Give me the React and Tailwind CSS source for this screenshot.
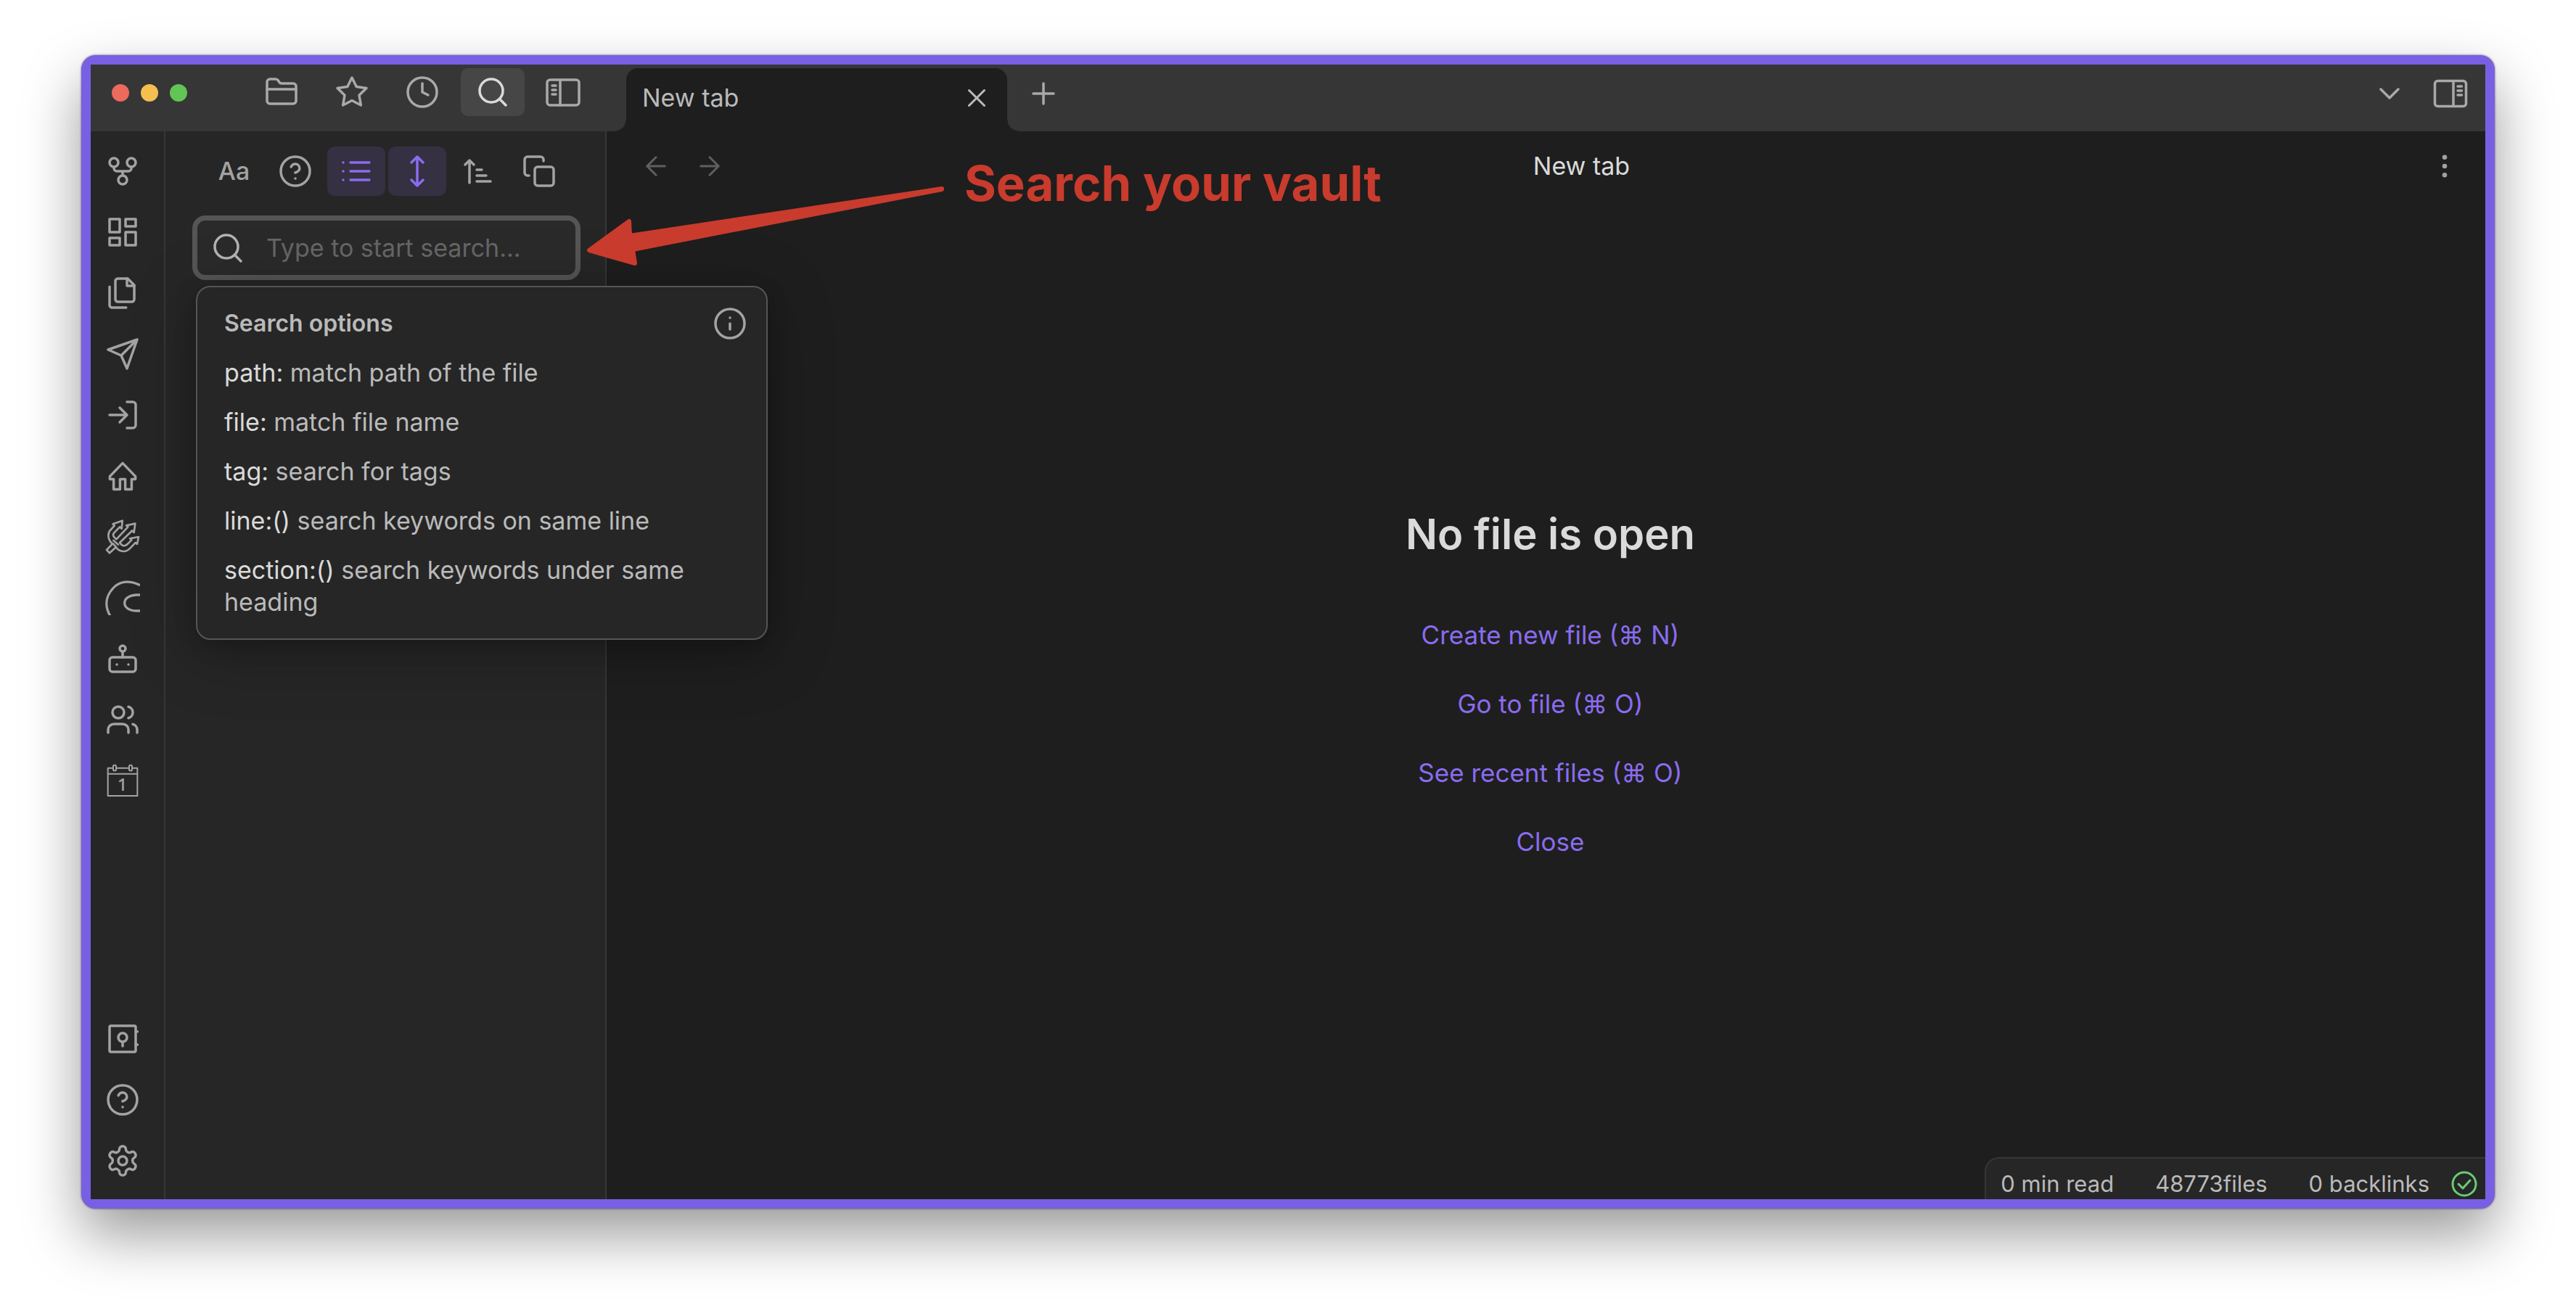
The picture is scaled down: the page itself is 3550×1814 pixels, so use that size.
import React from "react";

function Icon({ className = "size-12", children, ...rest }) {
  return (
    <svg
      viewBox="0 0 24 24"
      fill="none"
      stroke="currentColor"
      strokeWidth="1.75"
      strokeLinecap="round"
      strokeLinejoin="round"
      aria-hidden="true"
      className={`${className} shrink-0`}
      {...rest}
    >
      {children}
    </svg>
  );
}

const FolderIcon = () => (
  <Icon>
    <path d="M20 20a2 2 0 0 0 2-2V8a2 2 0 0 0-2-2h-7.9a2 2 0 0 1-1.69-.9L9.6 3.9A2 2 0 0 0 7.93 3H4a2 2 0 0 0-2 2v13a2 2 0 0 0 2 2Z" />
    <path d="M2 10h20" />
  </Icon>
);
const StarIcon = () => (
  <Icon>
    <polygon points="12 2 15.09 8.26 22 9.27 17 14.14 18.18 21.02 12 17.77 5.82 21.02 7 14.14 2 9.27 8.91 8.26 12 2" />
  </Icon>
);
const ClockIcon = () => (
  <Icon>
    <circle cx="12" cy="12" r="10" />
    <path d="M12 6v6l4 2" />
  </Icon>
);
const SearchIcon = () => (
  <Icon>
    <circle cx="11" cy="11" r="8" />
    <path d="m21 21-4.35-4.35" />
  </Icon>
);
const LeftPanelIcon = () => (
  <Icon viewBox="0 0 48 48" strokeWidth="3.5">
    <rect x="2" y="7" width="44" height="35" rx="4" />
    <path d="M20 7v35M9 15h5M9 21h5M9 27h5" />
  </Icon>
);
const RightPanelIcon = () => (
  <Icon viewBox="0 0 48 48" strokeWidth="3.5">
    <rect x="2.5" y="6.5" width="43" height="35" rx="4" />
    <path d="M28 6.5v35M34 14h5.5M34 20h5.5M34 26h5.5" />
  </Icon>
);
const CloseIcon = () => (
  <Icon className="size-[42px]">
    <path d="M18 6 6 18M6 6l12 12" />
  </Icon>
);
const PlusIcon = () => (
  <Icon>
    <path d="M5 12h14M12 5v14" />
  </Icon>
);
const ChevronIcon = () => (
  <Icon>
    <path d="m6 9 6 6 6-6" />
  </Icon>
);
const BackIcon = () => (
  <Icon className="size-[42px]">
    <path d="m12 19-7-7 7-7M19 12H5" />
  </Icon>
);
const ForwardIcon = () => (
  <Icon className="size-[42px]">
    <path d="M5 12h14M12 5l7 7-7 7" />
  </Icon>
);
const MoreIcon = () => (
  <Icon className="size-[42px]">
    <circle cx="12" cy="12" r="1" />
    <circle cx="12" cy="5" r="1" />
    <circle cx="12" cy="19" r="1" />
  </Icon>
);
const HelpIcon = () => (
  <Icon>
    <circle cx="12" cy="12" r="10" />
    <path d="M9.09 9a3 3 0 0 1 5.83 1c0 2-3 3-3 3M12 17h.01" />
  </Icon>
);
const ListIcon = () => (
  <Icon>
    <path d="M8 6h13M8 12h13M8 18h13M3 6h.01M3 12h.01M3 18h.01" />
  </Icon>
);
const MoveVerticalIcon = () => (
  <Icon>
    <path d="m8 18 4 4 4-4M8 6l4-4 4 4M12 2v20" />
  </Icon>
);
const SortIcon = () => (
  <Icon>
    <path d="m3 7.5 3-3 3 3M6 4.5V20M11 11h3.5M11 15h6.5M11 19h9.5" />
  </Icon>
);
const CopyIcon = () => (
  <Icon>
    <rect x="9" y="9" width="13" height="13" rx="2" />
    <path d="M5 15H4a2 2 0 0 1-2-2V4a2 2 0 0 1 2-2h9a2 2 0 0 1 2 2v1" />
  </Icon>
);
const InfoIcon = () => (
  <Icon>
    <circle cx="12" cy="12" r="10" />
    <path d="M12 16v-4M12 8h.01" />
  </Icon>
);

const GraphIcon = () => (
  <Icon>
    <circle cx="12" cy="18" r="3" />
    <circle cx="6" cy="6" r="3" />
    <circle cx="18" cy="6" r="3" />
    <path d="M18 9v1a2 2 0 0 1-2 2H8a2 2 0 0 1-2-2V9M12 12v3" />
  </Icon>
);
const DashboardIcon = () => (
  <Icon>
    <rect x="3" y="3" width="7" height="9" />
    <rect x="14" y="3" width="7" height="5" />
    <rect x="14" y="12" width="7" height="9" />
    <rect x="3" y="16" width="7" height="5" />
  </Icon>
);
const FilesIcon = () => (
  <Icon>
    <path d="M15.5 2H8.6c-.4 0-.8.2-1.1.5-.3.3-.5.7-.5 1.1v12.8c0 .4.2.8.5 1.1.3.3.7.5 1.1.5h9.8c.4 0 .8-.2 1.1-.5.3-.3.5-.7.5-1.1V6.5L15.5 2z" />
    <path d="M3 7.6v12.8c0 .4.2.8.5 1.1.3.3.7.5 1.1.5h9.8M15 2v5h5" />
  </Icon>
);
const SendIcon = () => (
  <Icon>
    <path d="M22 2 11 13M22 2l-7 20-4-9-9-4 20-7z" />
  </Icon>
);
const EnterIcon = () => (
  <Icon>
    <path d="M15 3h4a2 2 0 0 1 2 2v14a2 2 0 0 1-2 2h-4M10 17l5-5-5-5M15 12H3" />
  </Icon>
);
const HomeIcon = () => (
  <Icon>
    <path d="M12 3.2 20.8 12.3V14.2H18.2V21.2H13.8V14.2H10.2V21.2H5.8V14.2H3.2V12.3Z" />
  </Icon>
);
const TridentIcon = () => (
  <Icon viewBox="0 0 144 144" strokeWidth="8">
    <path d="M6 126 L30 101 C14 88 8 66 18 48 L38 26 L32 19 L71 5 L68 38 L60 31 L36 56 C31 62 33 68 37 73 L46 82 L94 31 L87 25 L124 17 L119 54 L112 46 L60 96 L68 105 C76 112 86 108 92 102 L109 85 L102 79 L138 72 L132 102 L125 96 L104 118 C86 138 62 136 44 115 L18 139 Z" />
    <path d="M32 100 L45 114 M34 87 L54 104" />
  </Icon>
);
const SwirlIcon = () => (
  <Icon viewBox="0 0 144 144" strokeWidth="10" strokeLinecap="butt">
    <path d="M144 20 C104 0 62 0 32 33 C2 66 -3 106 20 146" />
    <path d="M146 60 H128 C98 62 80 76 80 93 C80 112 98 126 132 126 H146" />
  </Icon>
);
const BotIcon = () => (
  <Icon>
    <rect x="3" y="11" width="18" height="10" rx="2" />
    <circle cx="12" cy="5" r="2" />
    <path d="M12 7v4M8 16h.01M16 16h.01" />
  </Icon>
);
const UsersIcon = () => (
  <Icon>
    <path d="M16 21v-2a4 4 0 0 0-4-4H6a4 4 0 0 0-4 4v2" />
    <circle cx="9" cy="7" r="4" />
    <path d="M22 21v-2a4 4 0 0 0-3-3.87M16 3.13a4 4 0 0 1 0 7.75" />
  </Icon>
);
const CalendarIcon = () => (
  <span className="grid size-12 place-items-center">
    <Icon className="col-start-1 row-start-1 size-12" viewBox="0 0 144 144" strokeWidth="6">
      <path d="M30 20H11V135H133V20H114M48 20H94M11 44H133" />
      <rect x="33" y="8" width="12" height="23" rx="5" />
      <rect x="99" y="8" width="12" height="23" rx="5" />
    </Icon>
    <span className="col-start-1 row-start-1 pt-2.5 font-['Noto_Sans',sans-serif] text-2xl leading-6 font-medium">1</span>
  </span>
);
const VaultIcon = () => (
  <Icon>
    <rect x="3" y="3" width="18" height="18" rx="1" />
    <circle cx="12" cy="11" r="3" />
    <path d="M12 14v3M21 7h1.2M21 16h1.2" />
  </Icon>
);
const SettingsIcon = () => (
  <Icon>
    <path d="M12.22 2h-.44a2 2 0 0 0-2 2v.18a2 2 0 0 1-1 1.73l-.43.25a2 2 0 0 1-2 0l-.15-.08a2 2 0 0 0-2.73.73l-.22.38a2 2 0 0 0 .73 2.73l.15.1a2 2 0 0 1 1 1.72v.51a2 2 0 0 1-1 1.74l-.15.09a2 2 0 0 0-.73 2.73l.22.38a2 2 0 0 0 2.73.73l.15-.08a2 2 0 0 1 2 0l.43.25a2 2 0 0 1 1 1.73V20a2 2 0 0 0 2 2h.44a2 2 0 0 0 2-2v-.18a2 2 0 0 1 1-1.73l.43-.25a2 2 0 0 1 2 0l.15.08a2 2 0 0 0 2.73-.73l.22-.39a2 2 0 0 0-.73-2.73l-.15-.08a2 2 0 0 1-1-1.74v-.5a2 2 0 0 1 1-1.74l.15-.09a2 2 0 0 0 .73-2.73l-.22-.38a2 2 0 0 0-2.73-.73l-.15.08a2 2 0 0 1-2 0l-.43-.25a2 2 0 0 1-1-1.73V4a2 2 0 0 0-2-2z" />
    <circle cx="12" cy="12" r="3" />
  </Icon>
);

const sidebarTabs = [
  ["Files", FolderIcon, false],
  ["Starred", StarIcon, false],
  ["Recent files", ClockIcon, false],
  ["Search", SearchIcon, true],
  ["Toggle left sidebar", LeftPanelIcon, false],
];

function TitleBar() {
  return (
    <header className="flex h-[92px] items-start bg-[#363636] pt-[5px] pr-6 pl-[29px] text-[#a9a9a9]">
      <div className="flex h-[68px] items-center gap-4">
        <button aria-label="Close window" className="size-6 rounded-full bg-[#ed6a5f]" />
        <button aria-label="Minimize window" className="size-6 rounded-full bg-[#f5bf4f]" />
        <button aria-label="Zoom window" className="size-6 rounded-full bg-[#62c555]" />
      </div>
      <nav className="ml-[86px] flex gap-[9px]">
        {sidebarTabs.map(([label, Glyph, active]) => (
          <button
            key={label}
            aria-label={label}
            className={`flex h-[66px] w-[88px] items-center justify-center rounded-[10px] ${
              active ? "bg-[#464646] text-[#dadada]" : ""
            }`}
          >
            <Glyph />
          </button>
        ))}
      </nav>
      <div className="relative ml-[43px] flex h-[87px] w-[525px] items-center justify-between rounded-t-2xl bg-[#1e1e1e] pr-[21px] pb-1.5 pl-[22px] text-[#bababa]">
        <span className="absolute right-full bottom-0 size-4 bg-[radial-gradient(circle_at_0_0,transparent_15px,#1e1e1e_16px)]" />
        <span className="text-[34px] leading-[44px]">New tab</span>
        <button aria-label="Close tab">
          <CloseIcon />
        </button>
        <span className="absolute bottom-0 left-full size-4 bg-[radial-gradient(circle_at_100%_0,transparent_15px,#1e1e1e_16px)]" />
      </div>
      <button aria-label="New tab" className="ml-[26px] flex h-[70px] items-center">
        <PlusIcon />
      </button>
      <div className="ml-auto flex h-[70px] items-center gap-9">
        <button aria-label="Tab list">
          <ChevronIcon />
        </button>
        <button aria-label="Toggle right sidebar">
          <RightPanelIcon />
        </button>
      </div>
    </header>
  );
}

const ribbonTop = [
  ["Open graph view", GraphIcon],
  ["Create new canvas", DashboardIcon],
  ["Templates", FilesIcon],
  ["Send", SendIcon],
  ["Open link", EnterIcon],
  ["Home", HomeIcon],
  ["Trident", TridentIcon],
  ["Swirl", SwirlIcon],
  ["Bot", BotIcon],
  ["People", UsersIcon],
  ["Daily note", CalendarIcon],
];
const ribbonBottom = [
  ["Open another vault", VaultIcon],
  ["Help", HelpIcon],
  ["Settings", SettingsIcon],
];

function RibbonGroup({ items }) {
  return (
    <div className="flex flex-col">
      {items.map(([label, Glyph]) => (
        <button key={label} aria-label={label} className="flex h-[84px] w-[87px] items-center justify-center">
          <Glyph />
        </button>
      ))}
    </div>
  );
}

function Ribbon() {
  return (
    <nav className="flex w-[103px] shrink-0 flex-col justify-between border-r-2 border-[#363636] bg-[#262626] pt-[13px] pb-[11px] text-[#a3a3a3]">
      <RibbonGroup items={ribbonTop} />
      <RibbonGroup items={ribbonBottom} />
    </nav>
  );
}

const tools = [
  ["Match case", () => <span className="text-[34px] leading-[44px] font-medium">Aa</span>, false],
  ["Explain search term", HelpIcon, false],
  ["Collapse results", ListIcon, true],
  ["Show more context", MoveVerticalIcon, true],
  ["Change sort order", SortIcon, false],
  ["Copy search results", CopyIcon, false],
];

const options = [
  ["path:", "match path of the file"],
  ["file:", "match file name"],
  ["tag:", "search for tags"],
  ["line:()", "search keywords on same line"],
  ["section:()", "search keywords under same heading"],
];

function SearchPane() {
  return (
    <aside className="relative z-10 w-[608px] shrink-0 border-r-2 border-[#363636] bg-[#262626] pt-[21px] text-[#a3a3a3]">
      <div className="flex justify-center gap-1 pl-[3px]">
        {tools.map(([label, Glyph, active]) => (
          <button
            key={label}
            aria-label={label}
            className={`flex h-[68px] w-20 items-center justify-center rounded-[10px] ${
              active ? "bg-[#353042] text-[#8a6cef]" : ""
            }`}
          >
            <Glyph />
          </button>
        ))}
      </div>
      <div className="relative mt-[27px] mr-[34px] ml-[37px]">
        <label className="flex h-[89px] items-center gap-[29px] rounded-[18px] border-[7px] border-[#555555] bg-[#2a2a2a] pl-[18px] text-[#b3b3b3]">
          <SearchIcon />
          <input
            type="text"
            aria-label="Search"
            placeholder="Type to start search..."
            className="min-w-0 flex-1 bg-transparent text-[34px] leading-[44px] outline-none placeholder:text-[#666666]"
          />
        </label>
        <section className="absolute top-full left-[5px] mt-2 flex w-[788px] flex-col gap-6 rounded-[20px] border-2 border-[#555555] bg-[#262626] py-7 pr-[26px] pl-[37px] text-[34px] leading-[44px] text-[#bababa] shadow-[0_16px_90px_rgba(0,0,0,0.25),0_8px_30px_rgba(0,0,0,0.2)]">
          <div className="flex h-11 items-center justify-between">
            <h3 className="text-[32px] font-semibold">Search options</h3>
            <button aria-label="Read more" className="text-[#a3a3a3]">
              <InfoIcon />
            </button>
          </div>
          {options.map(([term, text]) => (
            <p key={term}>
              <span className="text-[#dadada]">{term}</span> {text}
            </p>
          ))}
        </section>
      </div>
    </aside>
  );
}

const actions = ["Create new file (⌘ N)", "Go to file (⌘ O)", "See recent files (⌘ O)", "Close"];

function StatusBar() {
  return (
    <footer className="absolute right-0 bottom-0 flex h-[58px] items-center gap-[57px] rounded-tl-[20px] border-t-2 border-l-2 border-[#363636] bg-[#262626] pt-[13px] pr-[11px] pl-5 text-[31px] leading-[40px] text-[#bababa]">
      <span>0 min read</span>
      <span>48773files</span>
      <div className="flex items-center gap-[30px]">
        <span>0 backlinks</span>
        <svg viewBox="0 0 36 36" fill="none" stroke="#68cc73" strokeWidth="3" strokeLinecap="round" strokeLinejoin="round" className="size-9" aria-label="Synced">
          <circle cx="18" cy="18" r="16" />
          <path d="m10 18 6 6 10-11" />
        </svg>
      </div>
    </footer>
  );
}

function Workspace() {
  return (
    <main className="relative flex min-w-0 flex-1 flex-col bg-[#1e1e1e]">
      <div className="flex h-24 items-center pr-[35px] pl-[47px]">
        <div className="flex gap-8 text-[#5f5f5f]">
          <button aria-label="Back">
            <BackIcon />
          </button>
          <button aria-label="Forward">
            <ForwardIcon />
          </button>
        </div>
        <h1 className="flex-1 pl-3 text-center text-[34px] leading-[44px] text-[#dadada]">New tab</h1>
        <button aria-label="More options" className="text-[#a3a3a3]">
          <MoreIcon />
        </button>
      </div>
      <div className="flex flex-1 flex-col items-center justify-center gap-[51px] pb-12 pl-3 text-[35px] leading-[44px] text-[#8a6cef]">
        <h2 className="mb-[30px] text-[58px] leading-[72px] font-semibold text-[#dadada]">No file is open</h2>
        {actions.map((action) => (
          <button key={action}>{action}</button>
        ))}
      </div>
      <StatusBar />
    </main>
  );
}

function Annotation() {
  return (
    <div className="pointer-events-none absolute top-[121px] left-[680px] z-20 flex items-start gap-6 text-[#c93b2d]">
      <svg viewBox="805 210 500 160" width="500" height="160" fill="currentColor" stroke="currentColor" strokeWidth="6" strokeLinejoin="round" aria-hidden="true">
        <path d="M1298 260 L1298 261 L872 344 L875 363 L812 345 L867 305 L868 325 Z" />
      </svg>
      <p className="text-[67px] leading-[86px] font-bold">Search your vault</p>
    </div>
  );
}

export default function App() {
  return (
    <div className="flex min-h-screen bg-white px-28 pt-[76px] pb-[148px] font-['Inter','Noto_Sans',sans-serif]">
      <div className="relative flex min-w-0 flex-1 flex-col rounded-[20px] border-[13px] border-[#795fe4] bg-[#795fe4] shadow-[0_36px_80px_rgba(0,0,0,0.4),0_0_3px_rgba(0,0,0,0.6)]">
        <TitleBar />
        <div className="flex flex-1">
          <Ribbon />
          <SearchPane />
          <Workspace />
        </div>
        <Annotation />
      </div>
    </div>
  );
}
